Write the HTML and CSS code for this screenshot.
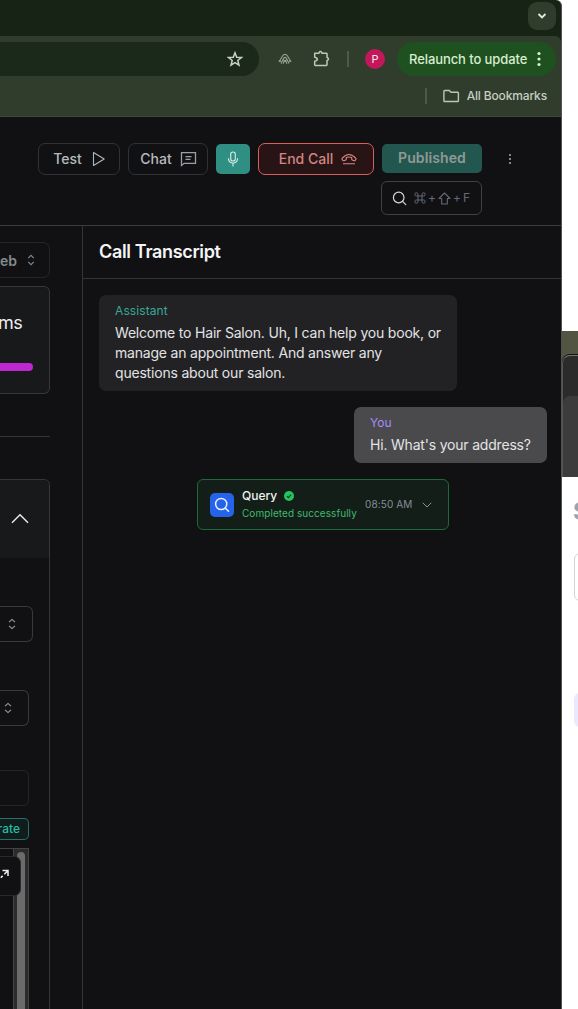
FILE: index.html
```html
<!DOCTYPE html>
<html lang="en">
<head>
<meta charset="utf-8">
<title>Call Transcript</title>
<link rel="stylesheet" href="styles.css">
</head>
<body>
<div class="desktop">
  <div class="back-window">
    <div class="back-wallpaper"><div class="back-tabs"><div class="back-toolbar"></div></div></div>
    <div class="back-page">
      <div class="back-heading">S</div>
      <div class="back-field"></div>
      <div class="back-chip"></div>
    </div>
  </div>

  <div class="browser">
    <div class="tabstrip">
      <span class="tab-search"><svg width="10" height="6" viewBox="0 0 10 6"><path d="M1.500 1l3.500 3.500L8.500 1" fill="none" stroke="#dfe8d8" stroke-width="1.900"/></svg></span>
    </div>
    <div class="chrome">
      <div class="toolbar">
        <div class="omnibox"><svg width="16" height="16" viewBox="0 0 16 16"><path d="M8 1.800l1.700 4.400 4.700.3-3.600 3 1.200 4.600L8 11.600l-4 2.500 1.200-4.600-3.600-3 4.700-.3z" fill="none" stroke="#c9d3c3" stroke-width="1.500"/></svg></div>
        <svg class="ext-arc" width="14" height="12" viewBox="0 0 14 12" fill="none" stroke="#98a394" stroke-width="1.100"><path d="M1 9L4.500 3Q7-.6 9.500 3L13 9M3 10.500l2.500-5Q7 3.200 8.500 5.500l2.500 5M5 10.800l1.200-2.500q.8-1.400 1.600 0L9 10.800M1 7.500l2 1M13 7.500l-2 1M5.500 7l3 2M8.500 7l-3 2"/></svg>
        <svg class="ext-puzzle" width="17" height="17" viewBox="0 0 17 17"><path d="M1.700 3.200H6V2.600Q7.400.4 8.800 2.600v.6h4.500q.7 0 .7.700V7.600h.5q2 1.400 0 2.800H14v4.400q0 .7-.7.700H2.400q-.7 0-.7-.7v-3.500q2.600-.6 2.600-2t-2.600-2z" fill="none" stroke="#b9ccb2" stroke-width="1.500" stroke-linejoin="round"/></svg>
        <span class="bar-divider tool-divider"></span>
        <span class="avatar">P</span>
        <div class="relaunch"><span>Relaunch to update</span><svg width="4" height="16" viewBox="0 0 4 16" fill="#d8ecd0"><circle cx="2" cy="2.500" r="1.600"/><circle cx="2" cy="8" r="1.600"/><circle cx="2" cy="13.500" r="1.600"/></svg></div>
      </div>
      <div class="bookmarks">
        <span class="bar-divider"></span>
        <svg width="17" height="14" viewBox="0 0 17 14"><path d="M1.700 1.500h4.600l1.700 1.700h6.600q.8 0 .8.800v7.700q0 .8-.8.800H1.700q-.8 0-.8-.8V2.300q0-.8.8-.8z" fill="none" stroke="#bdc5b8" stroke-width="1.400"/></svg>
        <span class="bm-label">All Bookmarks</span>
      </div>
    </div>

    <div class="app">
      <div class="actions">
        <div class="action-row">
          <button class="btn test"><span>Test</span><svg width="14" height="16" viewBox="0 0 14 16"><path d="M1.500 1.500v13L12.200 8z" fill="none" stroke="#b0b4ba" stroke-width="1.100" stroke-linejoin="round"/></svg></button>
          <button class="btn chat"><span>Chat</span><svg width="17" height="16" viewBox="0 0 17 16" fill="none" stroke="#9a9fa6" stroke-width="1.300"><path d="M1.500 1.700h14v10.600H4.200l-2.700 2.200z"/><path d="M5.500 5.600h6M5.500 8.400h5"/></svg></button>
          <button class="btn mic"><svg width="12" height="16" viewBox="0 0 12 16" fill="none" stroke="#d6eeea" stroke-width="1.100" stroke-linecap="round"><rect x="3.700" y="1" width="4.600" height="9" rx="2.300"/><path d="M1.400 7.500Q1.800 12 6 12t4.600-4.500M6 12v3"/></svg></button>
          <button class="btn end"><span>End Call</span><svg width="16" height="12" viewBox="0 0 16 12" fill="none" stroke="#d68682" stroke-width="1.100"><path d="M1.100 5.300Q8-2.300 14.900 5.300q.4.700-.1 1.300l-.7.900q-.5.500-1.200.2l-1.600-.8q-.6-.3-.6-1V4.600Q8 3.500 5.300 4.600v1.300q0 .7-.6 1l-1.600.8q-.7.3-1.200-.2l-.7-.9q-.5-.6-.1-1.300zM2 10.700h12"/></svg></button>
          <button class="btn published">Published</button>
          <svg class="kebab" width="4" height="12" viewBox="0 0 4 12" fill="#c4c6ca"><rect x="1.200" y="1.200" width="1.600" height="1.600"/><rect x="1.200" y="5.200" width="1.600" height="1.600"/><rect x="1.200" y="9.200" width="1.600" height="1.600"/></svg>
        </div>
        <div class="search"><svg width="15" height="15" viewBox="0 0 15 15" fill="none" stroke="#d4d6da" stroke-width="1.200" stroke-linecap="round"><circle cx="6.700" cy="6.500" r="5.300"/><path d="M10.600 10.400l3.200 3.200"/></svg><span class="keys"><svg width="12" height="12" viewBox="0 0 12 12"><path d="M4 4V2.600A1.600 1.600 0 1 0 2.600 4h6.800A1.600 1.600 0 1 0 8 2.600v6.800A1.600 1.600 0 1 0 9.400 8H2.600A1.600 1.600 0 1 0 4 9.400z" fill="none" stroke="#646977"/></svg><i>+</i><svg width="13" height="13" viewBox="0 0 13 13"><path d="M6.500 1L12 6.500H9.300V12H3.700V6.500H1z" fill="none" stroke="#646977" stroke-width="1.100" stroke-linejoin="round"/></svg><i>+</i><b>F</b></span></div>
      </div>

      <div class="workspace">
        <aside class="config">
          <div class="web-select"><span>eb</span><svg width="8" height="12" viewBox="0 0 8 12"><path d="M1.200 4.200L4 1.400l2.800 2.800M1.200 7.800L4 10.600l2.800-2.800" fill="none" stroke="#85888e" stroke-width="1.100"/></svg></div>
          <div class="latency"><div class="latency-label">ms</div><div class="latency-bar"></div></div>
          <hr class="rule">
          <section class="panel">
            <div class="panel-head"><svg width="18" height="11" viewBox="0 0 18 11"><path d="M1 9.700L9 1.700l8 8" fill="none" stroke="#e6e8ea" stroke-width="1.500"/></svg></div>
            <div class="panel-body">
              <div class="select wide"><svg width="8" height="12" viewBox="0 0 8 12"><path d="M1 4.200L4 1.400l3 2.800M1 7.800l3 2.800 3-2.800" fill="none" stroke="#9a9da3" stroke-width="1.100"/></svg></div>
              <div class="select"><svg width="8" height="12" viewBox="0 0 8 12"><path d="M1 4.200L4 1.400l3 2.800M1 7.800l3 2.800 3-2.800" fill="none" stroke="#9a9da3" stroke-width="1.100"/></svg></div>
              <div class="field"></div>
              <div class="generate">rate</div>
              <div class="prompt">
                <div class="track"><div class="thumb"></div></div>
                <div class="expand"><svg width="10" height="10" viewBox="0 0 10 10"><path d="M2.500 1.500H8V7M8 1.500l-3.700 3.700M2.600 6.900L.8 8.700" fill="none" stroke="#eee" stroke-width="1.500"/></svg></div>
              </div>
            </div>
          </section>
        </aside>

        <main class="transcript">
          <h1 class="title">Call Transcript</h1>
          <div class="messages">
            <div class="bubble assistant">
              <div class="who">Assistant</div>
              <p>Welcome to Hair Salon. Uh, I can help you book, or<br>manage an appointment. And answer any<br>questions about our salon.</p>
            </div>
            <div class="bubble user">
              <div class="who">You</div>
              <p>Hi. What's your address?</p>
            </div>
            <div class="tool">
              <span class="tool-icon"><svg width="16" height="16" viewBox="0 0 16 16" fill="none" stroke="#e8f0ff" stroke-width="1.500" stroke-linecap="round"><circle cx="7.200" cy="7" r="5.600"/><path d="M11.300 11.100l3.200 3.200"/></svg></span>
              <div class="tool-text">
                <div class="tool-name"><span>Query</span><svg width="10" height="10" viewBox="0 0 10 10"><circle cx="5" cy="5" r="5" fill="#22c55e"/><path d="M2.900 5.200l1.500 1.400 2.700-3" fill="none" stroke="#14301f" stroke-width="1.100"/></svg></div>
                <div class="tool-status">Completed successfully</div>
              </div>
              <span class="tool-time">08:50 AM</span>
              <svg class="tool-caret" width="10" height="6" viewBox="0 0 10 6"><path d="M.8.800L5 5 9.200.800" fill="none" stroke="#8b929b"/></svg>
            </div>
          </div>
        </main>
      </div>
    </div>
  </div>
</div>
</body>
</html>
```
FILE: styles.css
```css
* { box-sizing: border-box; }
body { margin: 0; background: #fff; font-family: Inter, "Liberation Sans", sans-serif; }
svg { display: block; flex: none; }
.desktop { position: relative; width: 578px; height: 1009px; overflow: hidden; white-space: nowrap; }

.back-window { position: absolute; left: 562px; top: 331px; width: 16px; height: 678px; overflow: hidden; background: #fff; }
.back-wallpaper { height: 146px; padding-top: 24px; background: #525542; }
.back-tabs { width: 80px; height: 122px; padding-top: 40px; background: #2b2b2b; border-top: 1px solid #777; border-left: 1px solid #555; border-top-left-radius: 8px; box-shadow: 0 -1px 0 #10120e; }
.back-toolbar { height: 81px; background: #3c3c3c; border-top-left-radius: 7px; }
.back-page { padding: 20px 0 0 12px; }
.back-heading { height: 30px; font-size: 24px; line-height: 30px; font-weight: 700; color: #9ca3af; text-indent: -1px; }
.back-field { width: 60px; height: 48px; margin-top: 26px; border: 1px solid #d4d4d8; border-radius: 6px; }
.back-chip { width: 60px; height: 34px; margin-top: 92px; border-radius: 6px; background: #ebe9fe; }

.browser { position: absolute; left: 0; top: 0; width: 562px; height: 1009px; display: flex; flex-direction: column; background: #172314; border-right: 1px solid #505050; border-top-right-radius: 6px; overflow: hidden; }
.tabstrip { flex: none; height: 36px; padding: 2px 5px 0 0; display: flex; justify-content: flex-end; }
.tab-search { width: 28px; height: 28px; border-radius: 9px; background: #303d2d; display: flex; align-items: center; justify-content: center; }
.chrome { flex: none; height: 81px; background: #303d2d; border-bottom: 1px solid #43483f; border-top-right-radius: 6px; }
.toolbar { height: 46px; padding-top: 6px; display: flex; align-items: center; }
.omnibox { width: 259px; height: 34px; margin-bottom: 6px; border-radius: 0 17px 17px 0; background: #1b291a; display: flex; align-items: center; justify-content: flex-end; padding-right: 16px; }
.toolbar > * { flex: none; }
.ext-arc { margin: 0 0 7px 19px; }
.ext-puzzle { margin: 0 0 8px 21px; }
.bar-divider { width: 2px; height: 16px; background: #4b5b47; }
.tool-divider { margin: 0 0 6px 17px; }
.avatar { width: 20px; height: 20px; margin: 0 0 6px 16px; border-radius: 50%; background: #c2185b; color: #fce4ec; font-size: 11px; line-height: 20px; text-align: center; }
.relaunch { width: 159px; height: 34px; margin: 0 0 6px 12px; padding-left: 12px; border-radius: 17px; background: #1e511f; color: #d8ecd0; font-size: 13px; letter-spacing: -.08px; font-weight: 500; display: flex; align-items: center; gap: 10px; }
.bookmarks { height: 27px; display: flex; align-items: center; justify-content: flex-end; padding-right: 14px; }
.bookmarks svg { margin: 0 7px 0 16px; }
.bm-label { font-size: 12px; letter-spacing: -.15px; font-weight: 500; color: #c6cec1; }

.app { flex: 1; min-height: 0; display: flex; flex-direction: column; background: #111113; }
.actions { flex: none; height: 109px; padding: 26px 79px 0 38px; border-bottom: 1px solid #3a3b3e; }
.action-row { display: flex; align-items: center; gap: 8px; height: 32px; width: 480px; }
.btn { flex: none; height: 32px; margin: 0; padding: 0; display: flex; align-items: center; justify-content: center; border: 1px solid #303236; border-radius: 7px; background: transparent; color: #b5b9bf; font: 500 14px/20px Inter, "Liberation Sans", sans-serif; }
.test { width: 82px; gap: 10px; padding-left: 1px; }
.chat { width: 80px; gap: 8px; padding-left: 1px; }
.mic { width: 34px; height: 30px; border: 0; border-radius: 5px; background: #2f8f83; }
.end { width: 116px; padding-left: 4px; gap: 8px; border-color: #d95f5c; background: #291415; color: #d08683; }
.published { width: 100px; height: 29px; margin-bottom: 1px; padding-bottom: 1px; border: 0; border-radius: 5px; background: #21574f; color: #929996; font-weight: 600; letter-spacing: .1px; }
.kebab { margin-left: 18px; }
.search { width: 101px; height: 34px; margin: 6px 0 0 343px; padding-left: 10px; border: 1px solid #3e4045; border-radius: 6px; display: flex; align-items: center; gap: 7px; }
.keys { display: flex; align-items: center; gap: 2px; color: #646977; }
.keys i, .keys b { font: 400 12px/16px Inter, sans-serif; }
.keys i { width: 8px; text-align: center; }

.workspace { flex: 1; min-height: 0; display: flex; }
.config { flex: none; width: 83px; padding-top: 16px; border-right: 1px solid #343539; overflow: hidden; }
.web-select { width: 50px; height: 36px; border: 1px solid #242528; border-left: 0; border-radius: 0 7px 7px 0; display: flex; align-items: center; gap: 10px; font-size: 14px; font-weight: 600; color: #85888c; }
.latency { width: 50px; height: 108px; margin-top: 8px; padding-top: 23px; border: 1px solid #34363a; border-left: 0; border-radius: 0 6px 6px 0; background: #18191b; }
.latency-label { height: 26px; font-size: 18px; letter-spacing: -.6px; line-height: 26px; color: #edeef0; text-indent: -2px; }
.latency-bar { width: 33px; height: 8px; margin-top: 27px; border-radius: 0 4px 4px 0; background: #bf27d1; }
.rule { width: 50px; height: 1px; margin: 42px 0 42px; border: 0; background: #34363a; }
.panel { width: 50px; height: 540px; border: 1px solid #34363a; border-left: 0; border-top-right-radius: 6px; }
.panel-head { height: 78px; padding: 0 0 2px 11px; display: flex; align-items: center; background: #18191b; border-top-right-radius: 5px; }
.panel-body { padding-top: 48px; }
.select { width: 29px; height: 36px; margin-bottom: 44px; padding-left: 4px; border: 1px solid #37393d; border-left: 0; border-radius: 0 6px 6px 0; display: flex; align-items: center; }
.select.wide { width: 33px; height: 36px; padding-left: 8px; margin-bottom: 48px; }
.field { width: 29px; height: 36px; border: 1px solid #242528; border-left: 0; border-radius: 0 6px 6px 0; }
.generate { width: 29px; height: 22px; margin-top: 12px; padding-right: 8px; border: 1px solid #257268; border-left: 0; border-radius: 0 5px 5px 0; background: #111d1c; color: #22bfa8; font-size: 12px; line-height: 20px; font-weight: 500; display: flex; justify-content: flex-end; }
.prompt { position: relative; width: 29px; height: 170px; margin-top: 8px; border: 1px solid #434345; border-left: 0; display: flex; justify-content: flex-end; }
.track { width: 15px; padding: 3px 3px 0; background: #2b2b2c; border-left: 1px solid #444; }
.thumb { width: 8px; height: 165px; border-radius: 4px; background: #6b6b6b; }
.expand { position: absolute; left: 0; top: 7px; width: 21px; height: 40px; padding-top: 12px; border: 1px solid #292a2d; border-left: 0; border-radius: 0 7px 7px 0; background: #111113; }

.transcript { flex: 1; min-width: 0; }
.title { height: 53px; margin: 0; padding-left: 16px; border-bottom: 1px solid #343539; color: #f3f4f5; font-size: 18px; letter-spacing: -.34px; line-height: 52px; font-weight: 600; }
.messages { padding: 16px 14px 0 16px; display: flex; flex-direction: column; gap: 16px; }
.bubble { padding: 8px 16px; border-radius: 7px; font-size: 14px; line-height: 20px; color: #e2e3e5; }
.bubble p { margin: 4px 0 0; letter-spacing: -.195px; }
.who { font-size: 12px; line-height: 16px; letter-spacing: .1px; }
.assistant { width: 358px; background: #222224; }
.assistant .who { color: #38a796; }
.user { width: 193px; align-self: flex-end; background: #4a4a4c; }
.user .who { color: #a78bfa; }
.tool { width: 252px; height: 51px; margin-left: 98px; padding: 0 0 0 12px; border: 1px solid #1b6b38; border-radius: 6px; background: #141e19; display: flex; align-items: center; }
.tool-icon { flex: none; width: 24px; height: 24px; border-radius: 5px; background: #2563eb; display: flex; align-items: center; justify-content: center; }
.tool-text { flex: none; width: 115px; margin: 0 0 2px 8px; }
.tool-name { display: flex; align-items: center; gap: 7px; height: 18px; font-size: 12px; font-weight: 500; color: #f0f1f2; }
.tool-status { height: 16px; font-size: 10px; letter-spacing: .06px; line-height: 16px; color: #3dbb6b; }
.tool-time { width: 49px; margin: 0 0 1px 8px; font-size: 10px; letter-spacing: .12px; color: #868d96; }
.tool-caret { margin-left: 8px; }
```
